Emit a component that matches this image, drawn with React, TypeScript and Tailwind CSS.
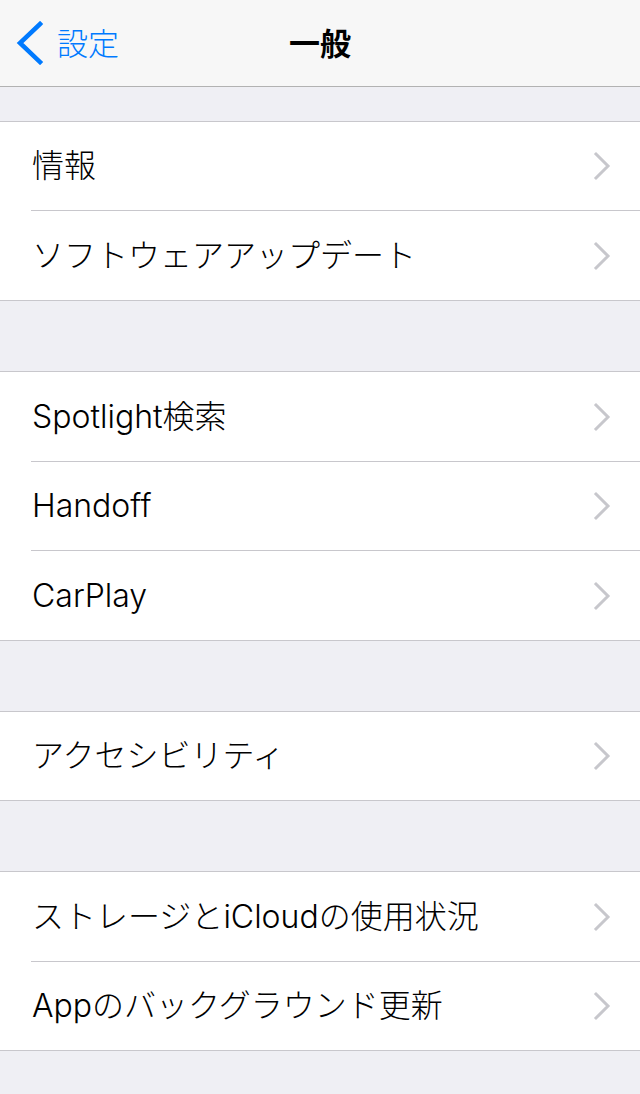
import React from "react";

const font = { fontFamily: '"Inter", "Noto Sans CJK JP", sans-serif' };

function Chevron() {
  return (
    <svg width="20" height="30" viewBox="0 0 20 30" className="shrink-0">
      <polyline points="3,3 15,15 3,27" fill="none" stroke="#c7c7cc" strokeWidth="3" strokeLinecap="square" strokeLinejoin="miter" />
    </svg>
  );
}

function Label({ text }: { text: string }) {
  const parts = text.split(/([A-Za-z]+)/).filter((p) => p.length > 0);
  return (
    <span className="text-[32px] leading-none text-black">
      {parts.map((p, i) =>
        /^[A-Za-z]+$/.test(p) ? (
          <span key={i} className="font-[350]">{p}</span>
        ) : (
          <span key={i} className="font-light">{p}</span>
        )
      )}
    </span>
  );
}

function Row({ label, h, last }: { label: string; h: string; last?: boolean }) {
  return (
    <div className={last ? "" : "ml-[31px] border-b border-[#c8c7cc]"}>
      <div className={`${h} flex items-center justify-between pr-[27px] ${last ? "pl-[32px]" : "pl-[1px]"}`}>
        <Label text={label} />
        <Chevron />
      </div>
    </div>
  );
}

function Group({ rows }: { rows: { label: string; h: string }[] }) {
  return (
    <div className="bg-white border-y border-[#c8c7cc]">
      {rows.map((r, i) => (
        <Row key={i} label={r.label} h={r.h} last={i === rows.length - 1} />
      ))}
    </div>
  );
}

export default function App() {
  return (
    <div className="w-[640px] h-[1094px] bg-[#efeff4] overflow-hidden" style={font}>
      <div className="h-[87px] bg-[#f7f7f7] border-b border-[#b2b2b2] relative flex items-center justify-center">
        <div className="absolute left-0 top-0 h-[86px] flex items-center">
          <svg width="30" height="44" viewBox="0 0 30 44" className="ml-[15px]">
            <polyline points="25,3 5,22 25,41" fill="none" stroke="#007aff" strokeWidth="4.5" strokeLinecap="square" strokeLinejoin="miter" />
          </svg>
          <span className="ml-[12px] text-[31px] leading-none font-light text-[#007aff]">設定</span>
        </div>
        <span className="text-[31px] leading-none font-bold text-black">一般</span>
      </div>
      <div className="h-[34px]" />
      <Group rows={[{ label: "情報", h: "h-[88px]" }, { label: "ソフトウェアアップデート", h: "h-[89px]" }]} />
      <div className="h-[70px]" />
      <Group
        rows={[
          { label: "Spotlight検索", h: "h-[89px]" },
          { label: "Handoff", h: "h-[88px]" },
          { label: "CarPlay", h: "h-[89px]" },
        ]}
      />
      <div className="h-[70px]" />
      <Group rows={[{ label: "アクセシビリティ", h: "h-[88px]" }]} />
      <div className="h-[70px]" />
      <Group
        rows={[
          { label: "ストレージとiCloudの使用状況", h: "h-[89px]" },
          { label: "Appのバックグラウンド更新", h: "h-[88px]" },
        ]}
      />
    </div>
  );
}
